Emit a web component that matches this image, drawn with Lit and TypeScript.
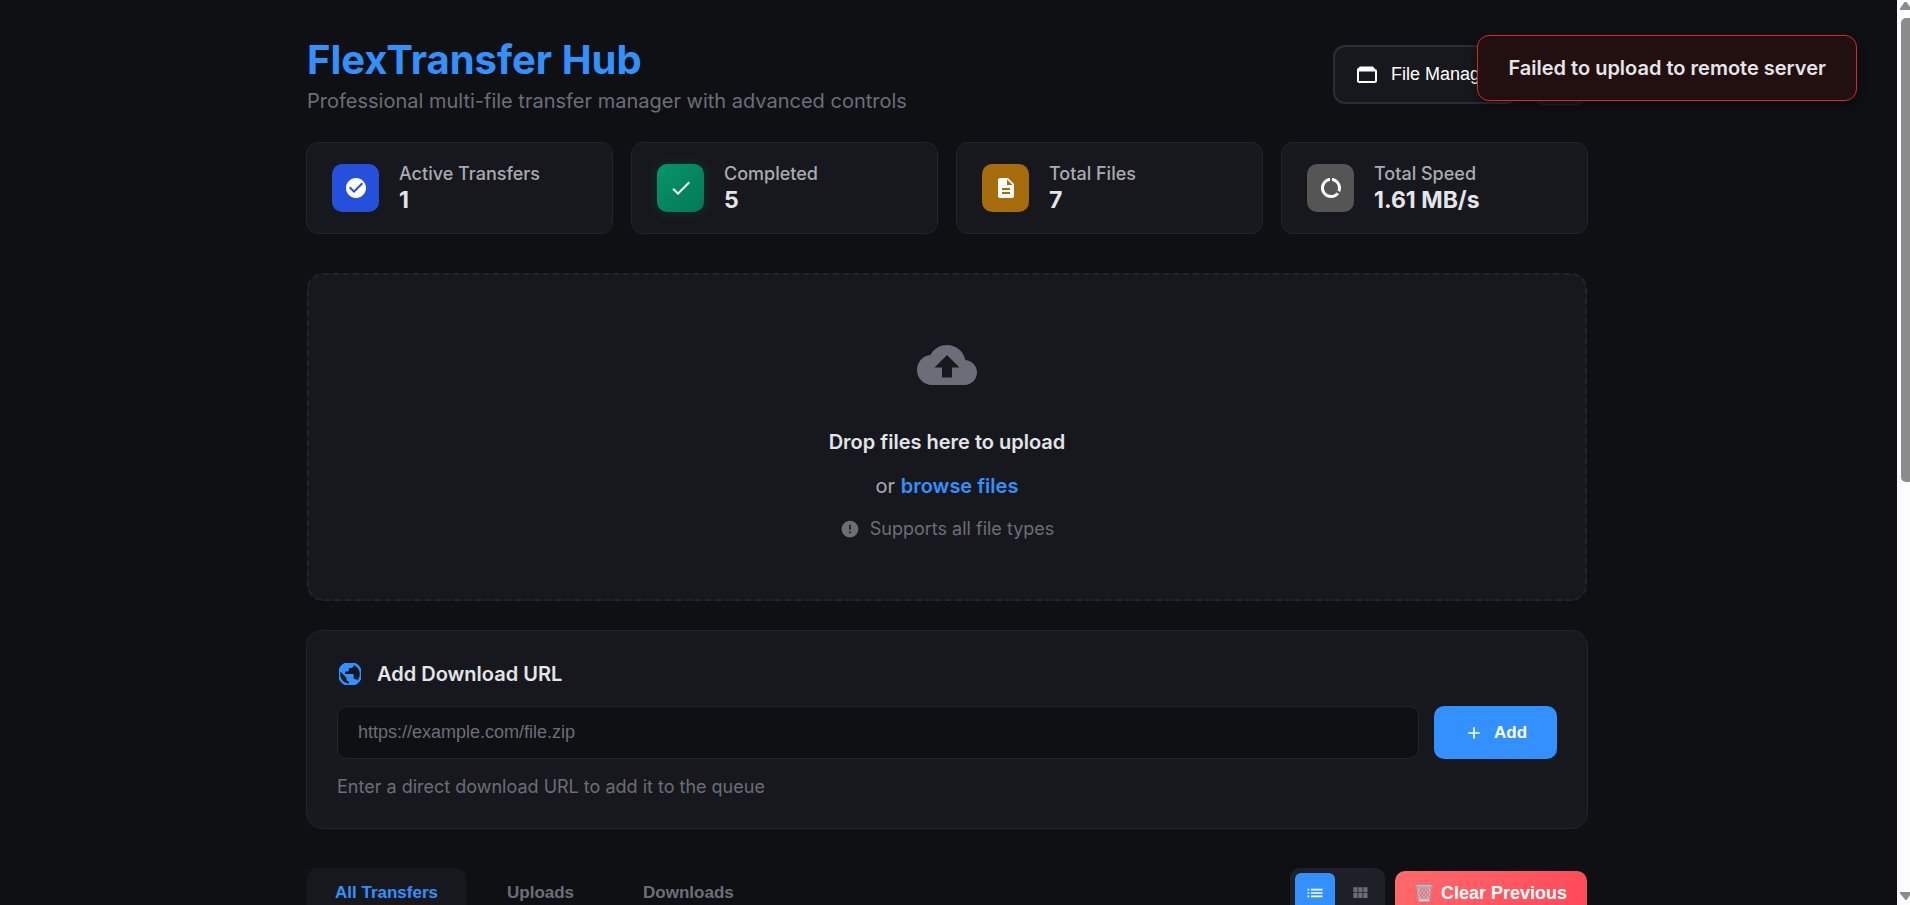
import { LitElement, html, css, svg } from "lit";
import { customElement, state } from "lit/decorators.js";

const icon = (d: string, cls: string, viewBox = "0 0 24 24") => html`<svg class=${cls} viewBox=${viewBox} fill="currentColor" aria-hidden="true">${svg`<path d=${d} fill-rule="evenodd"></path>`}</svg>`;

const ICONS = {
  checkCircle: "M12 2C6.48 2 2 6.48 2 12s4.48 10 10 10 10-4.48 10-10S17.52 2 12 2zm-2 15l-5-5 1.41-1.41L10 14.17l7.59-7.59L19 8l-9 9z",
  check: "M9 16.17L4.83 12l-1.42 1.41L9 19 21 7l-1.41-1.41z",
  file: "M14 2H6c-1.1 0-1.99.9-1.99 2L4 20c0 1.1.89 2 1.99 2H18c1.1 0 2-.9 2-2V8l-6-6zm2 16H8v-2h8v2zm0-4H8v-2h8v2zm-3-5V3.5L18.5 9H13z",
  ring: "M13 2.05v3.03c3.39.49 6 3.39 6 6.92 0 .9-.18 1.75-.48 2.54l2.6 1.53c.56-1.24.88-2.62.88-4.07 0-5.18-3.95-9.45-9-9.95zM12 19c-3.87 0-7-3.13-7-7 0-3.53 2.61-6.43 6-6.92V2.05c-5.06.5-9 4.76-9 9.95 0 5.52 4.47 10 9.99 10 3.31 0 6.24-1.61 8.06-4.09l-2.6-1.53C16.17 17.98 14.21 19 12 19z",
  cloud: "M19.35 10.04C18.67 6.59 15.64 4 12 4 9.11 4 6.6 5.64 5.35 8.04 2.34 8.36 0 10.91 0 14c0 3.31 2.69 6 6 6h13c2.76 0 5-2.24 5-5 0-2.64-2.05-4.78-4.65-4.96zM14 13v4h-4v-4H7l5-5 5 5h-3z",
  info: "M12 2C6.48 2 2 6.48 2 12s4.48 10 10 10 10-4.48 10-10S17.52 2 12 2zm1 15h-2v-2h2v2zm0-4h-2V7h2v6z",
  globe: "M12 2C6.48 2 2 6.48 2 12s4.48 10 10 10 10-4.48 10-10S17.52 2 12 2zm-1 17.93c-3.95-.49-7-3.85-7-7.93 0-.62.08-1.21.21-1.79L9 15v1c0 1.1.9 2 2 2v1.93zm6.9-2.54c-.26-.81-1-1.39-1.9-1.39h-1v-3c0-.55-.45-1-1-1H8v-2h2c.55 0 1-.45 1-1V7h2c1.1 0 2-.9 2-2v-.41c2.93 1.19 5 4.06 5 7.41 0 2.08-.8 3.97-2.1 5.39z",
  plus: "M19 13h-6v6h-2v-6H5v-2h6V5h2v6h6v2z",
  folder: "M20 6l-2-2.500H5L2 6v12c0 1.100.9 2 2 2h16c1.100 0 2-.9 2-2V8c0-1.100-.9-2-2-2zM20 18H4V8.600h16V18z",
  list: "M3 13h2v-2H3v2zm0 4h2v-2H3v2zm0-8h2V7H3v2zm4 4h14v-2H7v2zm0 4h14v-2H7v2zM7 7v2h14V7H7z",
  grid: "M4 11h5V5H4v6zm0 7h5v-6H4v6zm6 0h5v-6h-5v6zm6 0h5v-6h-5v6zm-6-7h5V5h-5v6zm6-6v6h5V5h-5z",
};

const basket = html`<svg class="basket" viewBox="0 0 18 18" aria-hidden="true">
  <path d="M2 3h14l-1.6 14.2H3.6z" fill="#c9b6bd"></path>
  <path d="M4 4l9 12M7.5 4l6.5 9M11 4l3.5 5M4.5 9l5.5 8M14 4L5 16M10.5 4L4.3 13M7 4L3.8 9M13.8 9L8 17" stroke="#e8697a" stroke-width="1" fill="none"></path>
  <path d="M2 3h14l-1.6 14.2H3.6z" fill="none" stroke="#a9a4b2" stroke-width="1.2"></path>
  <path d="M4 16.3h10" stroke="#ddd8e0" stroke-width="1.6"></path>
  <rect x="0.3" y="0.8" width="17.4" height="2.8" rx="1" fill="#a39fae"></rect>
  <path d="M1.5 1.8h15" stroke="#d6d3dc" stroke-width="0.8"></path>
</svg>`;

@customElement("app-root")
export class AppRoot extends LitElement {
  @state() private tab = "All Transfers";
  @state() private mode = "List";

  static styles = css`
    :host { display: block; height: 100vh; overflow: hidden; background: #0f1014; color: #e4e5e9; font-family: Inter, "Noto Sans", sans-serif; font-size: 18px; line-height: 24px; }
    * { box-sizing: border-box; }
    h1, h2, p { margin: 0; }
    button, input { font-family: "Liberation Sans", Arial, sans-serif; font-size: 17px; color: inherit; }
    button { border: 0; cursor: pointer; white-space: nowrap; }
    svg { display: block; flex: none; }
    .frame { display: flex; height: 100%; }
    .view { flex: 1; min-width: 0; height: 100%; overflow: hidden; padding: 36px 24px 0; }
    .page { max-width: 1282px; margin: 0 auto; }
    .head { display: flex; justify-content: space-between; align-items: flex-start; margin-bottom: 26px; padding-left: 1px; }
    h1 { color: #3291ff; font-size: 40px; line-height: 48px; font-weight: 700; margin-bottom: 2px; }
    .sub { color: #6b6e78; font-size: 20px; line-height: 30px; }
    .actions { display: flex; gap: 14px; padding-top: 9px; }
    .manager { display: flex; align-items: center; gap: 12px; height: 59px; padding: 0 20px; border: 2px solid #2a2d38; border-radius: 12px; background: #17181d; color: #fff; font-size: 18px; }
    .theme { width: 56px; height: 60px; border: 1px solid #23242c; border-radius: 12px; background: #17181d; }
    .stats { display: grid; grid-template-columns: repeat(4, 1fr); gap: 18px; margin-bottom: 39px; }
    .stat { display: flex; align-items: center; gap: 20px; padding: 19px 25px; border: 1px solid #23242c; border-radius: 12px; background: #17181d; }
    .tile { display: grid; place-items: center; width: 47px; height: 48px; border-radius: 10px; color: #fff; }
    .blue { background: #2550db; }
    .green { background: linear-gradient(135deg, #059669, #047857); box-shadow: 0 0 12px #05966933; }
    .amber { background: #a66b0a; }
    .grey { background: #555; }
    .label { color: #a9abb3; line-height: 24px; font-weight: 500; }
    .value { font-size: 23px; line-height: 28px; font-weight: 700; }
    .drop { display: flex; flex-direction: column; align-items: center; margin: 0 1px 29px; padding: 60px 24px 56px; border: 2px dashed #23242c; border-radius: 16px; background: #17181d; }
    .cloud { color: #6b6e78; margin-bottom: 32px; }
    .drop h2 { font-size: 20px; line-height: 30px; font-weight: 600; margin-bottom: 14px; }
    .or { color: #a9abb3; font-size: 20px; line-height: 30px; margin-bottom: 14px; }
    .or a { color: #3291ff; font-weight: 600; text-decoration: none; }
    .types { display: flex; align-items: center; gap: 10px; color: #6b6e78; line-height: 28px; }
    .url { border: 1px solid #23242c; border-radius: 16px; background: #17181d; padding: 28px 30px 27px; margin-bottom: 39px; }
    .title { display: flex; align-items: center; gap: 16px; margin-bottom: 17px; padding-left: 2px; font-size: 20px; line-height: 30px; font-weight: 600; }
    .globe { width: 22px; height: 22px; color: #3291ff; }
    .row { display: flex; gap: 15px; margin-bottom: 14px; }
    input { flex: 1; min-width: 0; height: 53px; padding: 0 20px; border: 1px solid #23242c; border-radius: 10px; background: #0f1014; font-size: 18px; outline: none; }
    input::placeholder { color: #6b6e78; opacity: 1; }
    .add { display: flex; align-items: center; justify-content: center; gap: 10px; width: 123px; border-radius: 10px; background: #3291ff; color: #fff; font-weight: 600; }
    .hint { color: #6b6e78; line-height: 28px; }
    .bar { display: flex; justify-content: space-between; align-items: flex-start; margin: 0 1px; }
    .tabs, .tools { display: flex; }
    .tabs { gap: 13px; }
    .tab { height: 50px; padding: 0 28px; border-radius: 10px; background: none; color: #6b6e78; font-weight: 600; }
    .tab.on { background: #17181d; color: #3291ff; }
    .tools { gap: 10px; align-items: center; }
    .switch { display: flex; gap: 5px; padding: 5px; border-radius: 10px; background: #1f2027; }
    .mode { display: grid; place-items: center; width: 40px; height: 40px; padding: 0; border-radius: 6px; background: none; color: #6b6e78; }
    .mode.on { background: #3291ff; color: #fff; }
    .clear { display: flex; align-items: center; gap: 8px; height: 44px; padding: 0 20px; border-radius: 10px; background: linear-gradient(135deg, #ff6b6b, #ff4757); color: #fff; font-size: 18px; font-weight: 600; }
    .basket { width: 18px; height: 18px; }
    .toast { position: absolute; top: 35px; right: 53px; padding: 17px 30px; border: 1px solid #dc2626; border-radius: 12px; background: #220f10; font-size: 20px; line-height: 30px; font-weight: 600; box-shadow: 0 4px 12px #0006; }
    .scroll { display: flex; flex-direction: column; width: 16px; padding-left: 3px; }
    .track { flex: 1; display: flex; flex-direction: column; align-items: flex-end; background: #fcfcfc; overflow: hidden; }
    .thumb { width: 9px; height: 464px; margin: 8px 0 auto; border-radius: 5px 0 0 5px; background: #8b8b8b; }
    .arrow { width: 10px; height: 10px; color: #8b8b8b; }
    .down { height: 14px; }
    .s60 { width: 60px; height: 60px; }
    .s24 { width: 24px; height: 24px; }
    .s20 { width: 20px; height: 20px; }
  `;

  private stat(color: string, path: string, label: string, value: string) {
    return html`<div class="stat"><div class="tile ${color}">${icon(path, "s24")}</div><div><div class="label">${label}</div><div class="value">${value}</div></div></div>`;
  }

  private modeButton(name: string, path: string) {
    return html`<button class="mode ${this.mode === name ? "on" : ""}" aria-label=${name} @click=${() => (this.mode = name)}>${icon(path, "s20")}</button>`;
  }

  render() {
    return html`
      <div class="frame">
        <div class="view"><main class="page">
          <header class="head">
            <div><h1>FlexTransfer Hub</h1><p class="sub">Professional multi-file transfer manager with advanced controls</p></div>
            <div class="actions"><button class="manager">${icon(ICONS.folder, "s24")}File Manager</button><button class="theme" aria-label="Theme"></button></div>
          </header>
          <section class="stats">
            ${this.stat("blue", ICONS.checkCircle, "Active Transfers", "1")}
            ${this.stat("green", ICONS.check, "Completed", "5")}
            ${this.stat("amber", ICONS.file, "Total Files", "7")}
            ${this.stat("grey", ICONS.ring, "Total Speed", "1.61 MB/s")}
          </section>
          <section class="drop">
            ${icon(ICONS.cloud, "s60 cloud")}
            <h2>Drop files here to upload</h2>
            <p class="or">or <a href="#">browse files</a></p>
            <p class="types">${icon(ICONS.info, "s20")}Supports all file types</p>
          </section>
          <section class="url">
            <label class="title" for="url">${icon(ICONS.globe, "globe", "3 3 18 18")}Add Download URL</label>
            <div class="row"><input id="url" type="url" placeholder="https://example.com/file.zip" /><button class="add">${icon(ICONS.plus, "s20")}Add</button></div>
            <p class="hint">Enter a direct download URL to add it to the queue</p>
          </section>
          <section class="bar">
            <div class="tabs">${["All Transfers", "Uploads", "Downloads"].map((t) => html`<button class="tab ${this.tab === t ? "on" : ""}" @click=${() => (this.tab = t)}>${t}</button>`)}</div>
            <div class="tools">
              <div class="switch">${this.modeButton("List", ICONS.list)}${this.modeButton("Grid", ICONS.grid)}</div>
              <button class="clear">${basket}Clear Previous</button>
            </div>
          </section>
        </main></div>
        <div class="scroll"><div class="track">
          <svg class="arrow" viewBox="0 0 10 10" fill="currentColor"><path d="M0 10V8.5L4.5 2h2L10 7v3z"></path></svg>
          <div class="thumb"></div>
          <svg class="arrow down" viewBox="0 0 10 14" fill="currentColor"><path d="M0 1h10v3L6.5 9h-1L0 2.5z"></path></svg>
        </div></div>
      </div>
      <div class="toast" role="alert">Failed to upload to remote server</div>
    `;
  }
}
